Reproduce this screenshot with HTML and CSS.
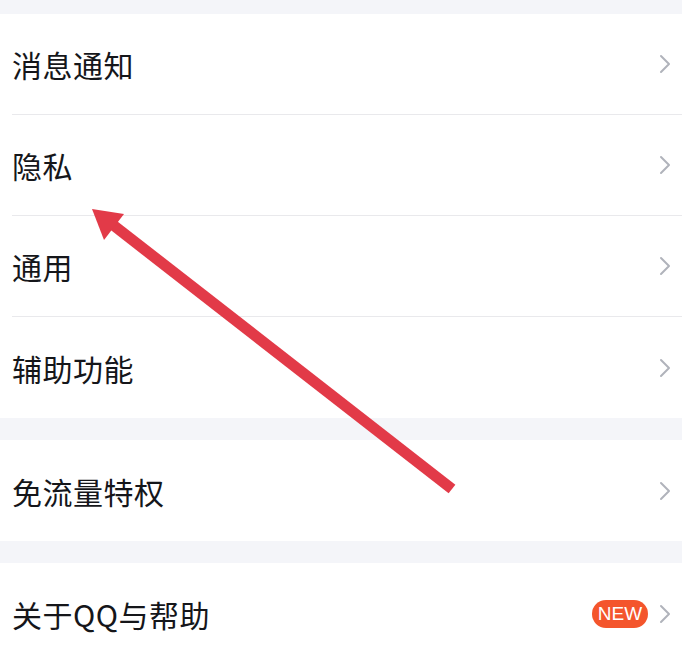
FILE: index.html
```html
<!DOCTYPE html>
<html lang="zh-CN">
<head>
<meta charset="utf-8">
<title>设置</title>
<link rel="stylesheet" href="styles.css">
</head>
<body>
<div class="page">
  <div class="group">
    <div class="row"><span class="label">消息通知</span><span class="chev"><svg width="12" height="20" viewBox="0 0 12 20"><path d="M2 2 L10 10 L2 18" fill="none" stroke="#b0b3bb" stroke-width="2" stroke-linecap="round" stroke-linejoin="round"/></svg></span></div>
    <div class="row"><span class="label">隐私</span><span class="chev"><svg width="12" height="20" viewBox="0 0 12 20"><path d="M2 2 L10 10 L2 18" fill="none" stroke="#b0b3bb" stroke-width="2" stroke-linecap="round" stroke-linejoin="round"/></svg></span></div>
    <div class="row"><span class="label">通用</span><span class="chev"><svg width="12" height="20" viewBox="0 0 12 20"><path d="M2 2 L10 10 L2 18" fill="none" stroke="#b0b3bb" stroke-width="2" stroke-linecap="round" stroke-linejoin="round"/></svg></span></div>
    <div class="row"><span class="label">辅助功能</span><span class="chev"><svg width="12" height="20" viewBox="0 0 12 20"><path d="M2 2 L10 10 L2 18" fill="none" stroke="#b0b3bb" stroke-width="2" stroke-linecap="round" stroke-linejoin="round"/></svg></span></div>
  </div>
  <div class="group">
    <div class="row"><span class="label">免流量特权</span><span class="chev"><svg width="12" height="20" viewBox="0 0 12 20"><path d="M2 2 L10 10 L2 18" fill="none" stroke="#b0b3bb" stroke-width="2" stroke-linecap="round" stroke-linejoin="round"/></svg></span></div>
  </div>
  <div class="group">
    <div class="row"><span class="label">关于QQ与帮助</span><span class="badge">NEW</span><span class="chev"><svg width="12" height="20" viewBox="0 0 12 20"><path d="M2 2 L10 10 L2 18" fill="none" stroke="#b0b3bb" stroke-width="2" stroke-linecap="round" stroke-linejoin="round"/></svg></span></div>
  </div>
  <svg class="arrow" width="682" height="656" viewBox="0 0 682 656">
    <line x1="452" y1="489" x2="108" y2="221" stroke="#e23a48" stroke-width="11"/>
    <polygon points="92,209 124,214 104,240" fill="#e23a48"/>
  </svg>
</div>
</body>
</html>
```

FILE: styles.css
```css
* { box-sizing: border-box; }
html, body {
  margin: 0;
  padding: 0;
  background: #f4f5f9;
}
body {
  font-family: "Noto Sans CJK SC", "Noto Sans", sans-serif;
  color: #15161a;
}
.page {
  position: relative;
  width: 682px;
  height: 656px;
  overflow: hidden;
  padding-top: 14px;
  display: flex;
  flex-direction: column;
  gap: 22px;
}
.group {
  background: #fff;
  padding-left: 12px;
}
.row {
  height: 101px;
  display: flex;
  align-items: center;
  border-bottom: 1px solid #e9e9ec;
  padding-right: 11px;
}
.row:last-child {
  border-bottom: none;
}
.label {
  flex: 1;
  font-size: 30px;
  line-height: 1;
  letter-spacing: 0.5px;
}
.chev {
  display: flex;
  width: 12px;
  height: 20px;
}
.badge {
  width: 56px;
  height: 28px;
  border-radius: 14px;
  background: #f4552c;
  color: #fff;
  font-family: "Liberation Sans", Arial, sans-serif;
  font-size: 19px;
  display: flex;
  align-items: center;
  justify-content: center;
  margin-right: 11px;
}
.arrow {
  position: absolute;
  left: 0;
  top: 0;
  pointer-events: none;
}
```
